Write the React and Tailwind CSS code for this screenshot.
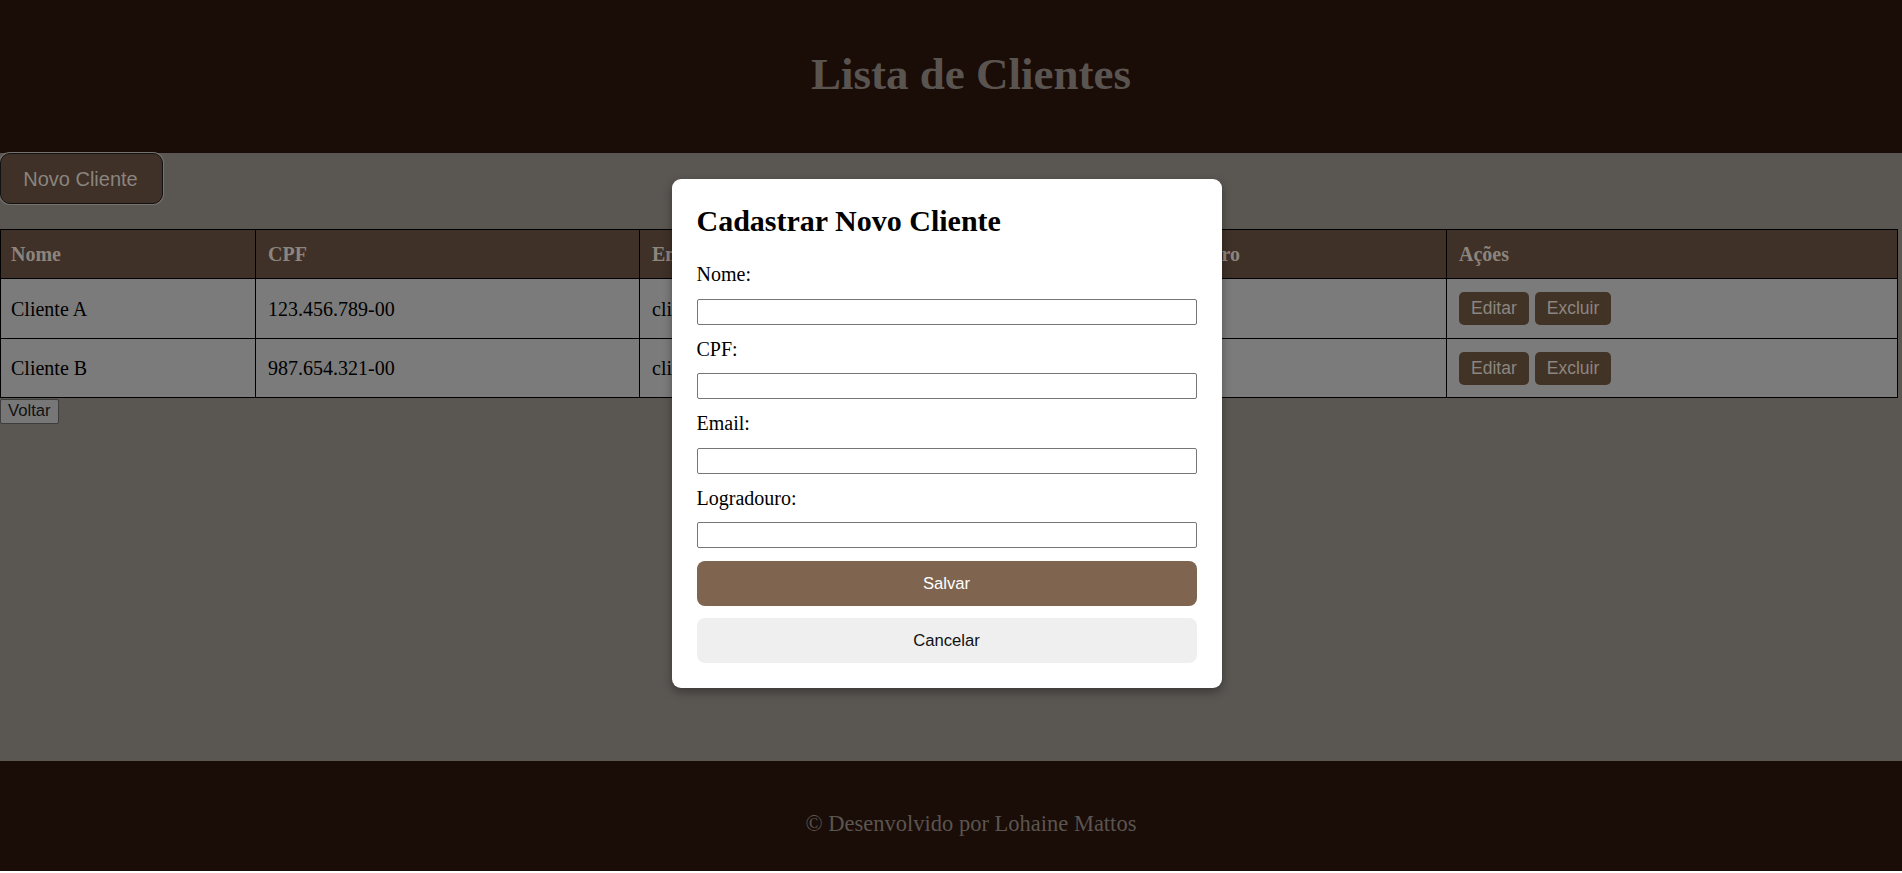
import React from 'react';

const clientes = [
  { nome: 'Cliente A', cpf: '123.456.789-00', email: 'clienteA@email.com', logradouro: 'Rua A, 12' },
  { nome: 'Cliente B', cpf: '987.654.321-00', email: 'clienteB@email.com', logradouro: 'Rua B, 45' },
];

const serif = "font-['Liberation_Serif',serif]";
const sans = "font-['Liberation_Sans',Arial,sans-serif]";

function Campo({ label, first }) {
  return (
    <div className={first ? '' : 'mt-[13px]'}>
      <label className="block text-[20px] leading-[23px] text-black">{label}</label>
      <input type="text" className="mt-[12.5px] block h-[26px] w-full rounded-[2px] border border-[#767676] bg-white" />
    </div>
  );
}

export default function App() {
  return (
    <div className={`relative h-[873px] w-[1902px] overflow-hidden ${serif}`}>
      {/* header */}
      <header className="flex h-[155px] items-center justify-center bg-[#1a0c06] pb-[7px] pl-[40px]">
        <h1 className="text-[45px] font-bold leading-[52px] text-[#5a5451]">Lista de Clientes</h1>
      </header>

      <main className="h-[608px] bg-[#5a5652]">
        <button className={`relative -mt-[2px] flex h-[51px] w-[163px] items-center justify-center rounded-[10px] border border-[#111] bg-[#3f3128] pr-[2px] text-[20px] text-[#8a857f] ring-1 ring-[#77726d] ${sans}`}>
          Novo Cliente
        </button>

        <table className="mt-[25px] w-[1897px] table-fixed border-collapse border border-black">
          <colgroup>
            <col className="w-[255px]" />
            <col className="w-[384px]" />
            <col className="w-[485px]" />
            <col className="w-[322px]" />
            <col className="w-[451px]" />
          </colgroup>
          <thead>
            <tr className="h-[49px] bg-[#3f3128] text-left text-[20px] font-bold text-[#8c857e]">
              <th className="border border-black pl-[10px]">Nome</th>
              <th className="border border-black pl-[12px]">CPF</th>
              <th className="border border-black pl-[12px]">Email</th>
              <th className="border border-black pl-[12px]">Logradouro</th>
              <th className="border border-black pl-[12px]">Ações</th>
            </tr>
          </thead>
          <tbody>
            {clientes.map((c, i) => (
              <tr key={i} className={`${i === 0 ? 'h-[60px]' : 'h-[59px]'} bg-[#7b7b7b] text-[20px] text-black`}>
                <td className="border border-black pl-[10px]">{c.nome}</td>
                <td className="border border-black pl-[12px]">{c.cpf}</td>
                <td className="border border-black pl-[12px]">{c.email}</td>
                <td className="border border-black pl-[17px] text-[#1a2a52]">{c.logradouro}</td>
                <td className="border border-black pl-[12px]">
                  <div className={`flex gap-[6px] ${sans}`}>
                    <button className="h-[33px] rounded-[5px] bg-[#423327] px-[12px] text-[17.5px] text-[#8c8680]">Editar</button>
                    <button className="h-[33px] rounded-[5px] bg-[#423327] px-[12px] text-[17.5px] text-[#8c8680]">Excluir</button>
                  </div>
                </td>
              </tr>
            ))}
          </tbody>
        </table>

        <button className={`mt-[1px] block h-[25px] rounded-[2px] border border-[#3d3d3d] bg-[#777777] px-[7px] text-[16.67px] leading-none text-[#111] ${sans}`}>
          Voltar
        </button>
      </main>

      {/* footer */}
      <footer className="h-[110px] bg-[#1a0c06] pl-[40px] pt-[50px] text-center">
        <p className="text-[22.5px] leading-[26px] text-[#5b5551]">© Desenvolvido por Lohaine Mattos</p>
      </footer>

      {/* modal */}
      <div className="absolute inset-0 flex items-start justify-center pr-[9px] pt-[179px]">
        <div className="w-[550px] rounded-[9px] bg-white p-[25px] shadow-[0_4px_10px_rgba(0,0,0,0.35)]">
          <h2 className="mb-[26px] text-[30px] font-bold leading-[33px] text-black">Cadastrar Novo Cliente</h2>
          <form onSubmit={(e) => e.preventDefault()}>
            <Campo label="Nome:" first />
            <Campo label="CPF:" />
            <Campo label="Email:" />
            <Campo label="Logradouro:" />
            <button type="submit" className={`mt-[13px] block h-[44.5px] w-full rounded-[8px] bg-[#7f6550] text-[16.67px] text-white ${sans}`}>
              Salvar
            </button>
            <button type="button" className={`mt-[12.5px] block h-[44.5px] w-full rounded-[8px] bg-[#efefef] text-[16.67px] text-[#111] ${sans}`}>
              Cancelar
            </button>
          </form>
        </div>
      </div>
    </div>
  );
}
